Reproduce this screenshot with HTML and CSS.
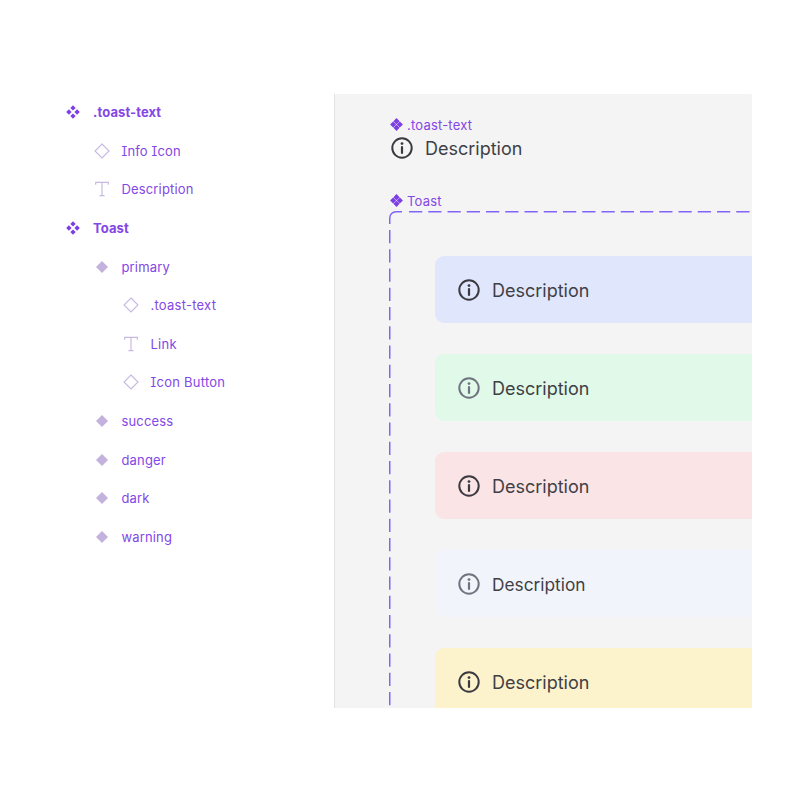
FILE: index.html
```html
<!DOCTYPE html>
<html lang="en">
<head>
<meta charset="utf-8">
<title>Toast</title>
<link rel="stylesheet" href="styles.css">
</head>
<body>
<svg class="defs" width="0" height="0" aria-hidden="true">
  <defs>
    <symbol id="comp" viewBox="0 0 14 14"><path d="M7 .2 9.700 2.900 7 5.600 4.300 2.900ZM2.900 4.300 5.600 7 2.900 9.700 .2 7ZM11.100 4.300 13.800 7 11.100 9.700 8.400 7ZM7 8.400 9.700 11.100 7 13.800 4.300 11.100Z"/></symbol>
    <symbol id="comp-fat" viewBox="0 0 14 14"><path d="M7 .1 10.300 3.400 7 6.700 3.700 3.400ZM3.400 3.700 6.700 7 3.400 10.300 .1 7ZM10.600 3.700 13.900 7 10.600 10.300 7.300 7ZM7 7.300 10.300 10.600 7 13.900 3.700 10.600Z"/></symbol>
    <symbol id="outline" viewBox="0 0 16 16"><path d="M8 1 15 8 8 15 1 8Z" fill="none" stroke="currentColor" stroke-width="1.100"/></symbol>
    <symbol id="solid" viewBox="0 0 16 16"><path d="M8 2 14 8 8 14 2 8Z"/></symbol>
    <symbol id="type" viewBox="0 0 14 14"><path d="M1.500 3.200V1.200H12.500V3.200M7 1.200V12.800M4.800 12.800H9.200" fill="none" stroke="currentColor" stroke-width="1"/></symbol>
    <symbol id="info" viewBox="0 0 24 24"><circle cx="12" cy="12" r="9.700" fill="none" stroke="currentColor" stroke-width="2"/><path d="M12 11V17" stroke="currentColor" stroke-width="2.200" stroke-linecap="round"/><circle cx="12" cy="7.600" r="1.400" fill="currentColor"/></symbol>
  </defs>
</svg>
<main class="page">
  <nav class="tree">
    <div class="row l0"><svg class="ic ic-comp"><use href="#comp"/></svg><span>.toast-text</span></div>
    <div class="row l1"><svg class="ic ic-line"><use href="#outline"/></svg><span>Info Icon</span></div>
    <div class="row l1"><svg class="ic ic-line"><use href="#type"/></svg><span>Description</span></div>
    <div class="row l0"><svg class="ic ic-comp"><use href="#comp"/></svg><span>Toast</span></div>
    <div class="row l1"><svg class="ic ic-solid"><use href="#solid"/></svg><span>primary</span></div>
    <div class="row l2"><svg class="ic ic-line"><use href="#outline"/></svg><span>.toast-text</span></div>
    <div class="row l2"><svg class="ic ic-line"><use href="#type"/></svg><span>Link</span></div>
    <div class="row l2"><svg class="ic ic-line"><use href="#outline"/></svg><span>Icon Button</span></div>
    <div class="row l1"><svg class="ic ic-solid"><use href="#solid"/></svg><span>success</span></div>
    <div class="row l1"><svg class="ic ic-solid"><use href="#solid"/></svg><span>danger</span></div>
    <div class="row l1"><svg class="ic ic-solid"><use href="#solid"/></svg><span>dark</span></div>
    <div class="row l1"><svg class="ic ic-solid"><use href="#solid"/></svg><span>warning</span></div>
  </nav>
  <section class="panel">
    <div class="label"><svg class="label-ic"><use href="#comp-fat"/></svg><span>.toast-text</span></div>
    <div class="toast-text"><svg class="info"><use href="#info"/></svg><span>Description</span></div>
    <div class="label label-toast"><svg class="label-ic"><use href="#comp-fat"/></svg><span>Toast</span></div>
    <div class="frame">
      <svg class="dash" width="420" height="520" aria-hidden="true">
        <path class="corner" d="M.75 13V7A6.250 6.250 0 0 1 7 .75H13"/>
        <path d="M20 .75H420"/>
        <path d="M.75 19V520"/>
      </svg>
      <div class="toast primary"><svg class="info"><use href="#info"/></svg><span>Description</span></div>
      <div class="toast success"><svg class="info muted"><use href="#info"/></svg><span>Description</span></div>
      <div class="toast danger"><svg class="info"><use href="#info"/></svg><span>Description</span></div>
      <div class="toast dark"><svg class="info muted"><use href="#info"/></svg><span class="narrow">Description</span></div>
      <div class="toast warning"><svg class="info"><use href="#info"/></svg><span>Description</span></div>
    </div>
  </section>
</main>
</body>
</html>
```
FILE: styles.css
```css
* { box-sizing: border-box; }
html, body { margin: 0; background: #fff; }
body { font-family: Inter, "Liberation Sans", sans-serif; font-feature-settings: "cv08", "ss02"; }
.defs { position: absolute; }
.page { display: flex; align-items: flex-start; height: 800px; padding-top: 92.9px; }
.tree { width: 334px; flex: none; color: #8347e6; font-size: 13px; line-height: 16px; }
.row { display: flex; align-items: center; height: 38.6px; letter-spacing: .15px; }
.l0 { padding-left: 66px; font-weight: 700; gap: 13px; letter-spacing: .1px; }
.l1 { padding-left: 94px; gap: 11.5px; }
.l2 { padding-left: 123px; gap: 11.5px; letter-spacing: .25px; }
.ic { flex: none; width: 16px; height: 16px; }
.ic-comp { width: 14px; height: 14px; fill: #7c3fe4; }
.ic-line { color: #c6b8e0; }
.ic-solid { fill: #c4b2de; }
.panel {
  width: 418px; height: 614px; margin-top: 1.1px; flex: none;
  background: #f4f4f4; border-left: 1px solid #e2e2e2; border-top-right-radius: 2px;
  overflow: hidden; padding: 23px 0 0 54px; color: #3f3f46;
}
.label { display: flex; align-items: center; gap: 4px; padding-left: 1px; color: #8347e6; font-size: 13px; line-height: 16px; height: 16px; letter-spacing: .2px; }
.label-ic { width: 13px; height: 13px; fill: #7c3fe4; flex: none; }
.label-toast { margin-top: 30px; }
.toast-text { display: flex; align-items: center; gap: 11px; height: 30px; padding-left: 1px; font-size: 18px; line-height: 22px; }
.toast-text span { padding-top: 2px; }
.info { width: 24px; height: 24px; flex: none; color: #3a3a40; }
.info.muted { color: #6f7480; }
.frame { position: relative; width: 420px; display: flex; flex-direction: column; gap: 31px; padding: 45px 0 0 46px; margin-top: 2px; }
.dash { position: absolute; left: 0; top: 0; fill: none; stroke: #8264f8; stroke-width: 1.5; stroke-dasharray: 13.25 6; }
.dash .corner { stroke-dasharray: none; }
.toast { display: flex; align-items: center; gap: 11px; height: 67px; width: 400px; padding: 1px 0 0 22px; border-radius: 9px; font-size: 18px; line-height: 24px; flex: none; }
.toast span { padding-top: 2px; }
.primary { background: #e0e6fc; }
.success { background: #e1f9e8; }
.danger { background: #fbe4e6; }
.dark { background: #f1f4fa; }
.warning { background: #fcf2cc; }
.narrow { font-size: 17.3px; }
```
